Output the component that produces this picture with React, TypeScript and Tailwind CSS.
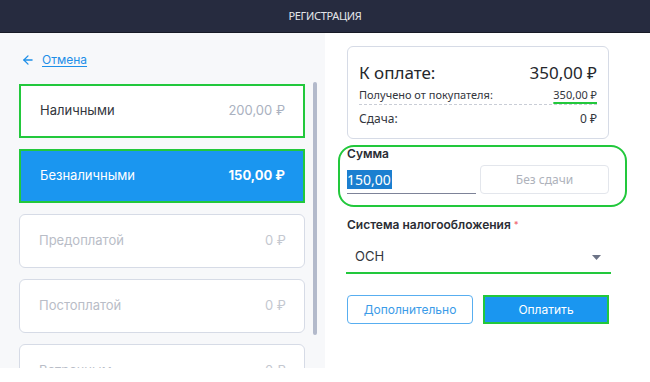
import { ArrowLeft } from 'lucide-react';

const cards = [
  { label: 'Наличными', amount: '200,00 ₽', kind: 'outlined' },
  { label: 'Безналичными', amount: '150,00 ₽', kind: 'active' },
  { label: 'Предоплатой', amount: '0 ₽', kind: 'idle' },
  { label: 'Постоплатой', amount: '0 ₽', kind: 'idle' },
  { label: 'Встречным', amount: '0 ₽', kind: 'idle' },
];

const PaymentCard = ({ label, amount, kind }: { label: string; amount: string; kind: string }) => {
  let box = 'bg-white border border-[#d6dbe6] rounded-[6px] text-[#b9bdc7]';
  let sum = 'text-[#c4c8d0]';
  if (kind === 'outlined') {
    box = 'bg-white border-2 border-[#22c83c] text-[#33363d]';
    sum = 'text-[#aab1c0]';
  }
  if (kind === 'active') {
    box = 'bg-[#1a96f0] border-2 border-[#22c83c] text-white';
    sum = 'text-white font-bold';
  }
  return (
    <div className={`h-[54px] shrink-0 flex items-center justify-between pl-[19px] pr-[18px] text-[13px] ${box}`}>
      <span>{label}</span>
      <span className={sum}>{amount}</span>
    </div>
  );
};

const App = () => {
  return (
    <div className="w-[650px] h-[382px] bg-white overflow-hidden" style={{ fontFamily: 'Inter, "Noto Sans", sans-serif' }}>
      <div className="h-[33px] bg-[#262b3f] border-b border-[#171a26] flex items-center justify-center">
        <span className="text-[11px] text-[#e4e6ea] tracking-[-0.3px]" style={{ fontFamily: '"Noto Sans", sans-serif' }}>
          РЕГИСТРАЦИЯ
        </span>
      </div>

      <div className="flex">
        <div className="w-[325px] h-[335px] bg-[#f7f8fa] overflow-hidden pl-[19px] pt-[19px]">
          <div className="flex items-center gap-[7px] h-[16px] text-[#1e8fe8]">
            <ArrowLeft size={14} strokeWidth={2.2} className="ml-[2px]" />
            <span className="text-[12px] underline underline-offset-2">Отмена</span>
          </div>
          <div className="flex mt-[16px]">
            <div className="w-[286px] flex flex-col gap-[11px]">
              {cards.map((c) => (
                <PaymentCard key={c.label} {...c} />
              ))}
            </div>
            <div className="ml-[8px] -mt-[2px] w-[4px] h-[253px] rounded-full bg-[#b3bacb]" />
          </div>
        </div>

        <div className="flex-1 pl-[22px] pt-[13px]">
          <div className="w-[262px] h-[93px] border border-[#d6dbe6] rounded-[6px] px-[11px] pt-[14px]" style={{ fontFamily: '"Noto Sans", sans-serif' }}>
            <div className="flex justify-between items-center h-[24px] text-[17px] text-[#25272c]">
              <span>К оплате:</span>
              <span>350,00 ₽</span>
            </div>
            <div className="flex justify-between items-center h-[19px] mt-[1px] text-[11px] text-[#33363d] border-b border-dashed border-[#c9cdd6]">
              <span>Получено от покупателя:</span>
              <span className="underline decoration-[#22c83c] decoration-2 underline-offset-[3px]">350,00 ₽</span>
            </div>
            <div className="flex justify-between items-center h-[28px] text-[12px] text-[#33363d]">
              <span>Сдача:</span>
              <span>0 ₽</span>
            </div>
          </div>

          <div className="-ml-[9px] mt-[6px] w-[289px] h-[62px] border-2 border-[#22c83c] rounded-[16px] pl-[7px]">
            <div className="text-[12px] font-semibold text-[#2b2e35] h-[13px] leading-[13px]">Сумма</div>
            <div className="flex gap-[4px] mt-[5px]">
              <div className="w-[129px] h-[29px] border-b border-[#7d8398] flex items-center">
                <span className="bg-[#1b7fd0] text-white text-[14px] leading-[19px] pr-[1px]" style={{ fontFamily: '"Noto Sans", sans-serif' }}>
                  150,00
                </span>
              </div>
              <div className="w-[129px] h-[29px] border border-[#e3e6ec] rounded-[4px] flex items-center justify-center text-[12px] text-[#aeb2bb]" style={{ fontFamily: '"Noto Sans", sans-serif' }}>
                Без сдачи
              </div>
            </div>
          </div>

          <div className="mt-[10px] text-[12px] font-semibold text-[#2b2e35] h-[16px] leading-[16px]">
            Система налогообложения <span className="text-[#f0707a] text-[9px] align-top">*</span>
          </div>
          <div className="-ml-[1px] mt-[9px] w-[265px] h-[32px] border-b-2 border-[#22c83c] flex items-center justify-between pl-[9px] pr-[10px]">
            <span className="text-[13px] text-[#33363d]">ОСН</span>
            <svg width="9" height="5" viewBox="0 0 9 5">
              <path d="M0 0h9L4.5 5z" fill="#6c7386" />
            </svg>
          </div>

          <div className="flex gap-[10px] mt-[21px]">
            <button className="w-[126px] h-[29px] border border-[#58aef0] rounded-[4px] text-[12px] text-[#3a9be8] bg-white">
              Дополнительно
            </button>
            <button className="w-[126px] h-[29px] border-2 border-[#22c83c] bg-[#1a96f0] text-[12px] text-white">
              Оплатить
            </button>
          </div>
        </div>
      </div>
    </div>
  );
};

export default App;
